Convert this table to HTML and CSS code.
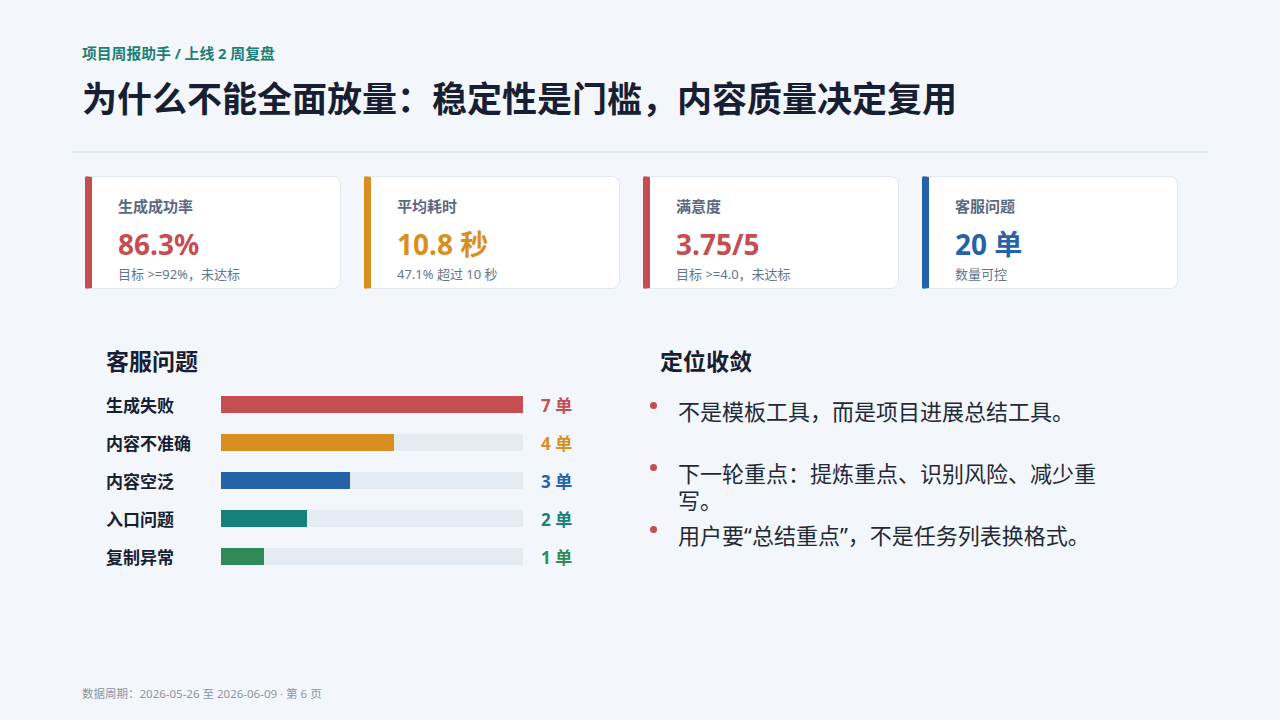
FILE: index.html
```html
<!DOCTYPE html>
<html lang="zh-CN">
<head>
<meta charset="utf-8">
<title>项目周报助手 / 上线 2 周复盘</title>
<link rel="stylesheet" href="styles.css">
</head>
<body>
<div class="slide">
  <header class="header">
    <div class="kicker">项目周报助手 / 上线 2 周复盘</div>
    <h1 class="title">为什么不能全面放量：稳定性是门槛，内容质量决定复用</h1>
  </header>
  <div class="divider"></div>

  <section class="cards">
    <div class="card card-red">
      <div class="card-label">生成成功率</div>
      <div class="card-value val-red">86.3%</div>
      <div class="card-note">目标 &gt;=92%，未达标</div>
    </div>
    <div class="card card-orange">
      <div class="card-label">平均耗时</div>
      <div class="card-value val-orange">10.8 秒</div>
      <div class="card-note">47.1% 超过 10 秒</div>
    </div>
    <div class="card card-red">
      <div class="card-label">满意度</div>
      <div class="card-value val-red">3.75/5</div>
      <div class="card-note">目标 &gt;=4.0，未达标</div>
    </div>
    <div class="card card-blue">
      <div class="card-label">客服问题</div>
      <div class="card-value val-blue">20 单</div>
      <div class="card-note">数量可控</div>
    </div>
  </section>

  <section class="lower">
    <div class="chart">
      <h2 class="section-title">客服问题</h2>
      <div class="bar-row">
        <span class="bar-label">生成失败</span>
        <span class="bar-track"><span class="bar-fill fill-red" style="width:100%"></span></span>
        <span class="bar-value val-red">7 单</span>
      </div>
      <div class="bar-row">
        <span class="bar-label">内容不准确</span>
        <span class="bar-track"><span class="bar-fill fill-orange" style="width:57.14%"></span></span>
        <span class="bar-value val-orange">4 单</span>
      </div>
      <div class="bar-row">
        <span class="bar-label">内容空泛</span>
        <span class="bar-track"><span class="bar-fill fill-blue" style="width:42.86%"></span></span>
        <span class="bar-value val-blue">3 单</span>
      </div>
      <div class="bar-row">
        <span class="bar-label">入口问题</span>
        <span class="bar-track"><span class="bar-fill fill-teal" style="width:28.57%"></span></span>
        <span class="bar-value val-teal">2 单</span>
      </div>
      <div class="bar-row">
        <span class="bar-label">复制异常</span>
        <span class="bar-track"><span class="bar-fill fill-green" style="width:14.29%"></span></span>
        <span class="bar-value val-green">1 单</span>
      </div>
    </div>

    <div class="points">
      <h2 class="section-title points-title">定位收敛</h2>
      <ul class="point-list">
        <li class="point point-first">不是模板工具，而是项目进展总结工具。</li>
        <li class="point">下一轮重点：提炼重点、识别风险、减少重写。</li>
        <li class="point">用户要“总结重点”，不是任务列表换格式。</li>
      </ul>
    </div>
  </section>

  <footer class="footer">数据周期：2026-05-26 至 2026-06-09 · 第 6 页</footer>
</div>
</body>
</html>
```

FILE: styles.css
```css
* { box-sizing: border-box; }

html, body {
  margin: 0;
  padding: 0;
}

body {
  background: #f3f6fa;
  font-family: "Noto Sans", "Noto Sans CJK SC", sans-serif;
  color: #172033;
}

.slide {
  width: 1280px;
  height: 720px;
  padding: 0 72px;
  display: flex;
  flex-direction: column;
}

.header {
  padding: 43px 10px 0;
}

.kicker {
  font-size: 14.8px;
  line-height: 20px;
  font-weight: 700;
  color: #1b7f77;
}

.title {
  margin: 13px 0 0;
  font-size: 35px;
  line-height: 46px;
  font-weight: 700;
  color: #172033;
}

.divider {
  margin-top: 29px;
  height: 2px;
  background: #e3e8ef;
}

.cards {
  margin-top: 23px;
  margin-left: 13px;
  display: flex;
  gap: 23px;
}

.card {
  width: 256px;
  height: 113px;
  background: #ffffff;
  border: 1px solid #e2e8f0;
  border-left: 7px solid #c44e52;
  border-radius: 2px 8px 8px 2px;
  padding: 18px 16px 0 26px;
}

.card-red { border-left-color: #c44e52; }
.card-orange { border-left-color: #d98e20; }
.card-blue { border-left-color: #2563a8; }

.card-label {
  font-size: 15px;
  line-height: 22px;
  font-weight: 700;
  color: #5b6880;
}

.card-value {
  margin-top: 9px;
  font-size: 28px;
  line-height: 36px;
  font-weight: 700;
}

.card-note {
  margin-top: 3px;
  font-size: 13px;
  line-height: 18px;
  color: #64748b;
}

.val-red { color: #c44e52; }
.val-orange { color: #d98e20; }
.val-blue { color: #2563a8; }
.val-teal { color: #16807a; }
.val-green { color: #2e8b57; }

.lower {
  margin-top: 57px;
  margin-left: 13px;
  display: flex;
}

.chart {
  width: 565px;
  padding-left: 21px;
}

.section-title {
  margin: 0;
  font-size: 23px;
  line-height: 30px;
  font-weight: 700;
  color: #172033;
}

.chart .section-title {
  margin-bottom: 9px;
}

.bar-row {
  height: 38px;
  display: flex;
  align-items: center;
}

.bar-label {
  width: 115px;
  font-size: 17px;
  font-weight: 700;
  color: #172033;
}

.bar-track {
  width: 302px;
  height: 17px;
  background: #e4ebf3;
  display: flex;
}

.bar-fill {
  height: 100%;
}

.fill-red { background: #c44e52; }
.fill-orange { background: #d98e20; }
.fill-blue { background: #2563a8; }
.fill-teal { background: #16807a; }
.fill-green { background: #2e8b57; }

.bar-value {
  margin-left: 18px;
  font-size: 17px;
  font-weight: 700;
}

.points-title {
  margin-left: 10px;
  margin-bottom: 22px;
}

.point-list {
  list-style: none;
  margin: 0;
  padding: 0;
  width: 460px;
}

.point {
  display: flex;
  gap: 21px;
  font-size: 22px;
  line-height: 27px;
  color: #1f2937;
  margin-bottom: 8px;
}

.point::before {
  content: "";
  flex: 0 0 7px;
  width: 7px;
  height: 7px;
  margin-top: 4px;
  border-radius: 50%;
  background: #c44e52;
}

.point-first {
  margin-bottom: 35px;
}

.footer {
  margin-top: auto;
  margin-bottom: 18px;
  padding-left: 10px;
  font-size: 11.5px;
  line-height: 16px;
  color: #8b95a5;
}
```
